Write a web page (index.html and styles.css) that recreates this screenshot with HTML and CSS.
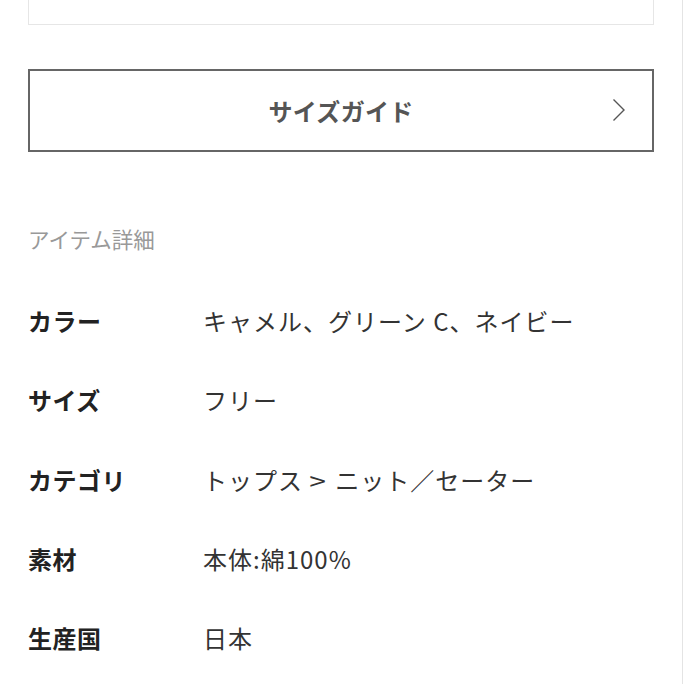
FILE: index.html
```html
<!DOCTYPE html>
<html lang="ja">

<head>
    <meta charset="UTF-8">
    <meta name="viewport" content="width=device-width, initial-scale=1.0">
    <title>アイテム詳細</title>
    <link rel="stylesheet" href="styles.css">
</head>

<body>
    <div class="page">
        <div class="top-box"></div>

        <a class="guide" href="#">
            <span class="guide-text">サイズガイド</span>
            <svg class="guide-arrow" width="14" height="24" viewBox="0 0 14 24">
                <path d="M1.5 1.5 L12 12 L1.5 22.5" fill="none" stroke="#555" stroke-width="1.4" />
            </svg>
        </a>

        <h2 class="section-title">アイテム詳細</h2>

        <dl class="spec">
            <div class="spec-row">
                <dt>カラー</dt>
                <dd>キャメル、グリーン C、ネイビー</dd>
            </div>
            <div class="spec-row">
                <dt>サイズ</dt>
                <dd>フリー</dd>
            </div>
            <div class="spec-row">
                <dt>カテゴリ</dt>
                <dd>トップス<span class="sep">&gt;</span>ニット／セーター</dd>
            </div>
            <div class="spec-row">
                <dt>素材</dt>
                <dd>本体:綿100%</dd>
            </div>
            <div class="spec-row">
                <dt>生産国</dt>
                <dd>日本</dd>
            </div>
        </dl>
    </div>
</body>

</html>
```

FILE: styles.css
```css
body {
    margin: 0;
    background: #fff;
    font-family: "Noto Sans CJK JP", "Noto Sans", sans-serif;
    color: #333;
}

.page {
    box-sizing: border-box;
    width: 683px;
    height: 684px;
    padding: 0 28px;
    border-right: 1px solid #e4e4e4;
    overflow: hidden;
}

.top-box {
    height: 24px;
    border: 1px solid #e6e6e6;
    border-top: none;
}

.guide {
    display: flex;
    align-items: center;
    justify-content: center;
    position: relative;
    box-sizing: border-box;
    height: 83px;
    margin-top: 44px;
    border: 2px solid #666;
    text-decoration: none;
}

.guide-text {
    font-size: 24px;
    font-weight: bold;
    color: #555;
    letter-spacing: 0.3px;
}

.guide-arrow {
    position: absolute;
    right: 26px;
    top: 27px;
}

.section-title {
    margin: 72px 0 0;
    font-size: 21.5px;
    line-height: 30px;
    font-weight: normal;
    color: #999;
}

.spec {
    margin: 27px 0 0;
}

.spec-row {
    display: flex;
    align-items: center;
    height: 79.25px;
    font-size: 24px;
}

.spec-row dt {
    width: 175px;
    font-weight: bold;
    color: #222;
    letter-spacing: 0.5px;
}

.spec-row dd {
    margin: 0;
    color: #333;
    letter-spacing: 1px;
}

.sep {
    display: inline-block;
    margin: 0 10px 0 8px;
    transform: scaleX(1.25);
}
```
